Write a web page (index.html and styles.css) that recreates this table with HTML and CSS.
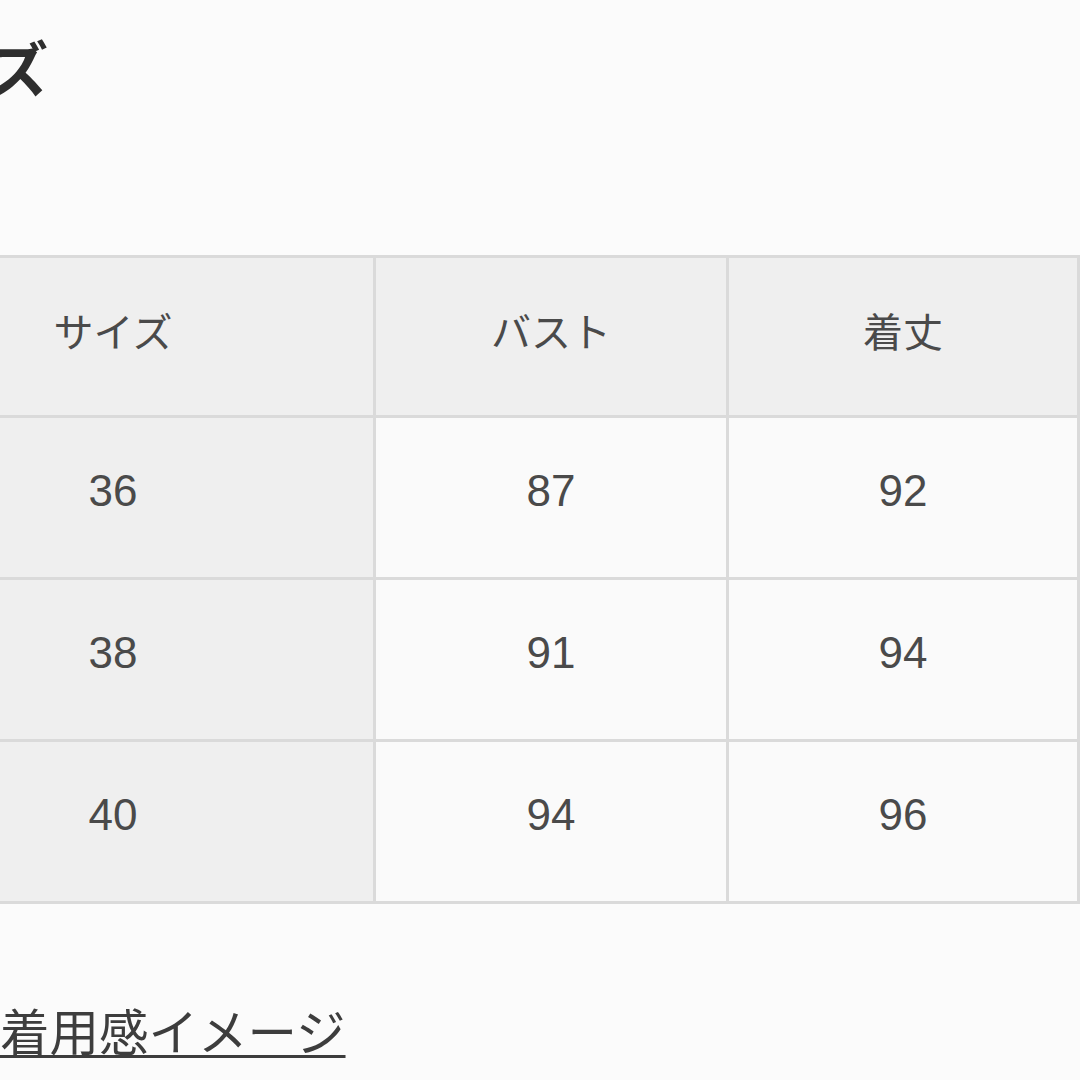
FILE: index.html
```html
<!DOCTYPE html>
<html lang="ja">
<head>
<meta charset="utf-8">
<link rel="stylesheet" href="styles.css">
</head>
<body>
<div class="page">
  <h2 class="title">サイズ</h2>
  <div class="size-table">
    <div class="cell head">サイズ</div>
    <div class="cell head">バスト</div>
    <div class="cell head">着丈</div>
    <div class="cell side num">36</div>
    <div class="cell num">87</div>
    <div class="cell num">92</div>
    <div class="cell side num">38</div>
    <div class="cell num">91</div>
    <div class="cell num">94</div>
    <div class="cell side num">40</div>
    <div class="cell num">94</div>
    <div class="cell num">96</div>
  </div>
  <a class="link">着用感イメージ</a>
</div>
</body>
</html>
```
FILE: styles.css
```css
html, body {
  margin: 0;
  padding: 0;
  background: #fbfbfb;
}
body {
  width: 1080px;
  height: 1080px;
  overflow: hidden;
  font-family: "Liberation Sans", "Noto Sans CJK JP", sans-serif;
  color: #474747;
}
.page {
  margin-left: -150px;
  width: 1230px;
  padding-top: 32px;
}
.title {
  margin: 0 0 0 20px;
  font-size: 60px;
  font-weight: 700;
  line-height: 80px;
  color: #2e2e2e;
  letter-spacing: 0;
}
.size-table {
  margin-top: 143px;
  display: grid;
  grid-template-columns: 520px 350px 348px;
  grid-template-rows: 157px 159px 159px 159px;
  gap: 3px;
  padding: 3px;
  background: #dadada;
}
.cell {
  display: flex;
  align-items: center;
  justify-content: center;
  background: #fafafa;
  padding-bottom: 14px;
  box-sizing: border-box;
  font-size: 40px;
  color: #4a4a4a;
}
.head, .side {
  background: #efefef;
}
.num {
  font-size: 44px;
}
.link {
  display: inline-block;
  margin: 95px 0 0 150px;
  font-family: "Noto Sans CJK JP", sans-serif;
  font-size: 49.5px;
  line-height: 62px;
  color: #3d3d3d;
  text-decoration: underline;
  text-decoration-thickness: 3px;
  text-underline-offset: 4px;
}
```
